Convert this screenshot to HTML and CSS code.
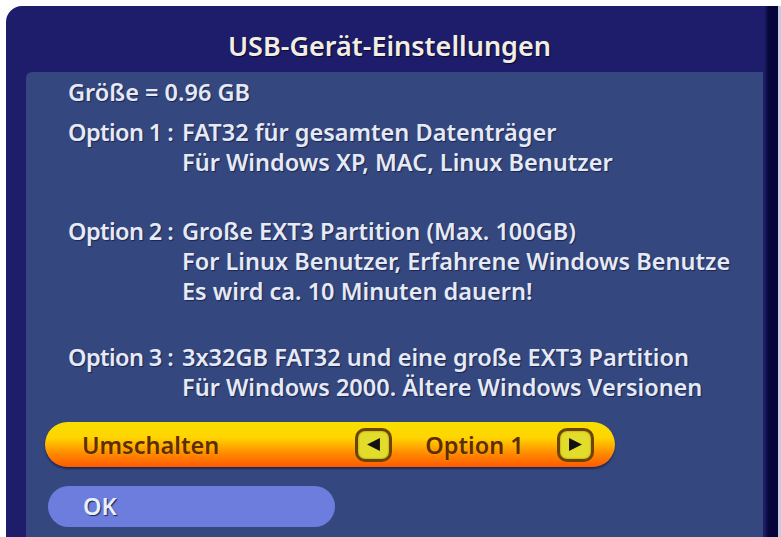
FILE: index.html
```html
<!DOCTYPE html>
<html lang="de">
<head>
<meta charset="utf-8">
<title>USB-Gerät-Einstellungen</title>
<link rel="stylesheet" href="styles.css">
</head>
<body>
<div class="screen">
  <div class="frame">
    <div class="main">
      <div class="header"><h1 class="title">USB-Gerät-Einstellungen</h1></div>
      <div class="panel">
        <div class="size">Größe = 0.96 GB</div>
        <div class="option opt1">
          <div class="label">Option 1 :</div>
          <div class="desc">FAT32 für gesamten Datenträger<br>Für Windows XP, MAC, Linux Benutzer</div>
        </div>
        <div class="option opt2">
          <div class="label">Option 2 :</div>
          <div class="desc">Große EXT3 Partition (Max. 100GB)<br>For Linux Benutzer, Erfahrene Windows Benutze<br>Es wird ca. 10 Minuten dauern!</div>
        </div>
        <div class="option opt3">
          <div class="label">Option 3 :</div>
          <div class="desc">3x32GB FAT32 und eine große EXT3 Partition<br>Für Windows 2000. Ältere Windows Versionen</div>
        </div>
        <div class="switch">
          <span class="switch-label">Umschalten</span>
          <span class="arrow"><svg viewBox="0 0 14 14" width="15" height="15"><path d="M1 7 L13 1 L13 13 Z" fill="#111"/></svg></span>
          <span class="switch-value">Option 1</span>
          <span class="arrow"><svg viewBox="0 0 14 14" width="15" height="15"><path d="M13 7 L1 1 L1 13 Z" fill="#111"/></svg></span>
        </div>
        <div class="ok">OK</div>
      </div>
    </div>
    <div class="band"></div>
    <div class="edge"></div>
  </div>
</div>
</body>
</html>
```
FILE: styles.css
```css
html, body {
  margin: 0;
  padding: 0;
  background: #ffffff;
}
.screen {
  padding: 6px 0 0 6px;
  height: 537px;
  box-sizing: border-box;
  overflow: hidden;
}
.frame {
  display: flex;
  height: 531px;
  background: #1d1d6b;
  border-top-left-radius: 16px;
  font-family: "Noto Sans", "Open Sans", sans-serif;
  font-weight: 600;
  color: #e6eaf6;
}
.main {
  flex: 1;
  display: flex;
  flex-direction: column;
}
.band {
  width: 13px;
  background: linear-gradient(to right, #1a1a5a, #05053a 30%, #05053a);
}
.edge {
  width: 3px;
  background: #c8cce0;
}
.header {
  height: 66px;
  box-sizing: border-box;
  padding: 12px 0 0 8px;
  display: flex;
  align-items: center;
  justify-content: center;
}
.title {
  margin: 0;
  font-size: 27px;
  font-weight: 600;
  color: #f2eee4;
  text-shadow: 1px 1px 1px #0a0a30;
}
.panel {
  flex: 1;
  margin-left: 20px;
  margin-right: 2px;
  background: #34487f;
  border-top-left-radius: 6px;
  padding: 5px 0 0 42px;
  font-size: 23.5px;
  line-height: 30px;
  text-shadow: 1px 1px 1px #1a2550;
}
.option {
  display: flex;
}
.label {
  width: 114px;
  flex-shrink: 0;
  white-space: nowrap;
  letter-spacing: -0.6px;
}
.desc {
  white-space: nowrap;
}
.opt1 { margin-top: 10px; }
.opt2 { margin-top: 39px; }
.opt3 { margin-top: 36px; }
.switch {
  margin: 20px 0 0 -23px;
  width: 570px;
  height: 45px;
  box-sizing: border-box;
  border-radius: 23px;
  background: linear-gradient(to bottom, #f6e000 0%, #ffd400 35%, #ff8a00 70%, #ff5a00 100%);
  display: flex;
  align-items: center;
  padding-left: 37px;
  color: #5e2c00;
  text-shadow: 0 0 1px #ffd000;
  box-shadow: 0 2px 2px rgba(10, 10, 40, 0.5);
}
.switch-label {
  width: 273px;
}
.arrow {
  width: 37px;
  height: 34px;
  box-sizing: border-box;
  border: 3px solid #6a4400;
  border-radius: 10px;
  background: #e2dc2a;
  box-shadow: inset 0 0 2px #9a7a00;
  display: flex;
  align-items: center;
  justify-content: center;
}
.switch-value {
  width: 165px;
  text-align: center;
}
.ok {
  margin: 19px 0 0 -20px;
  width: 287px;
  height: 41px;
  box-sizing: border-box;
  border-radius: 21px;
  background: #6d7ddd;
  padding-left: 35px;
  line-height: 41px;
  color: #e8f0ff;
}
```
